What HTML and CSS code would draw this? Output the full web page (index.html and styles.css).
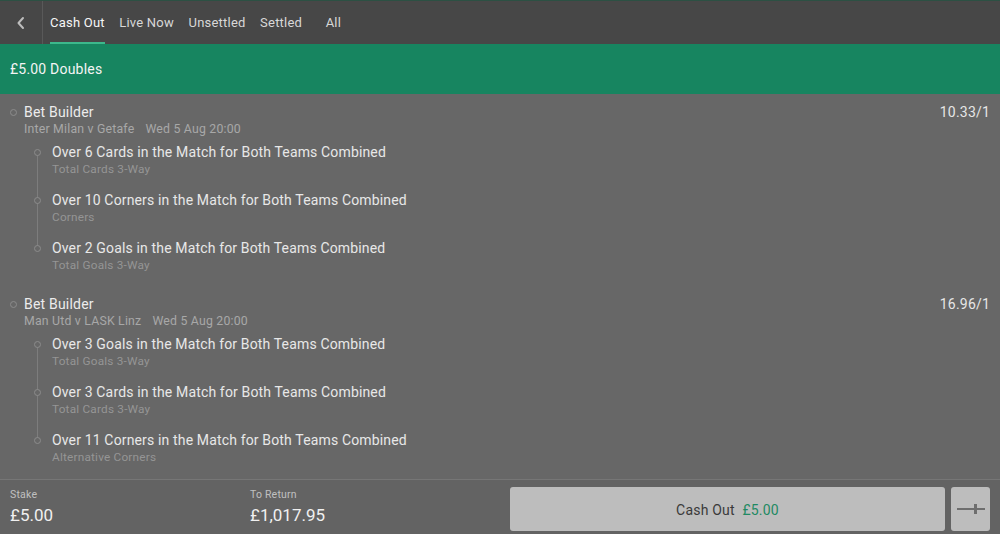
FILE: index.html
```html
<!DOCTYPE html>
<html lang="en">
<head>
    <meta charset="UTF-8">
    <meta name="viewport" content="width=device-width, initial-scale=1.0">
    <title>My Bets</title>
    <link rel="stylesheet" href="styles.css">
</head>
<body>

    <div class="app">
        <!-- Barra superior con pestañas -->
        <header class="topbar">
            <div class="back">
                <svg width="10" height="14" viewBox="0 0 10 14"><path d="M7 2 L2.5 7 L7 12" fill="none" stroke="#bdbdbd" stroke-width="2" stroke-linecap="round" stroke-linejoin="round"/></svg>
            </div>
            <nav class="tabs">
                <span class="tab active">Cash Out</span>
                <span class="tab">Live Now</span>
                <span class="tab">Unsettled</span>
                <span class="tab">Settled</span>
                <span class="tab tab-all">All</span>
            </nav>
        </header>

        <div class="banner">£5.00 Doubles</div>

        <main class="bets">
            <section class="bet">
                <div class="bet-head">
                    <div class="bet-title"><span class="dot"></span>Bet Builder</div>
                    <div class="odds">10.33/1</div>
                </div>
                <div class="bet-sub">Inter Milan v Getafe<span class="when">Wed 5 Aug 20:00</span></div>
                <div class="legs">
                    <div class="leg">
                        <div class="leg-title"><span class="dot"></span>Over 6 Cards in the Match for Both Teams Combined</div>
                        <div class="leg-market">Total Cards 3-Way</div>
                    </div>
                    <div class="leg">
                        <div class="leg-title"><span class="dot"></span>Over 10 Corners in the Match for Both Teams Combined</div>
                        <div class="leg-market">Corners</div>
                    </div>
                    <div class="leg">
                        <div class="leg-title"><span class="dot"></span>Over 2 Goals in the Match for Both Teams Combined</div>
                        <div class="leg-market">Total Goals 3-Way</div>
                    </div>
                </div>
            </section>

            <section class="bet">
                <div class="bet-head">
                    <div class="bet-title"><span class="dot"></span>Bet Builder</div>
                    <div class="odds">16.96/1</div>
                </div>
                <div class="bet-sub">Man Utd v LASK Linz<span class="when">Wed 5 Aug 20:00</span></div>
                <div class="legs">
                    <div class="leg">
                        <div class="leg-title"><span class="dot"></span>Over 3 Goals in the Match for Both Teams Combined</div>
                        <div class="leg-market">Total Goals 3-Way</div>
                    </div>
                    <div class="leg">
                        <div class="leg-title"><span class="dot"></span>Over 3 Cards in the Match for Both Teams Combined</div>
                        <div class="leg-market">Total Cards 3-Way</div>
                    </div>
                    <div class="leg">
                        <div class="leg-title"><span class="dot"></span>Over 11 Corners in the Match for Both Teams Combined</div>
                        <div class="leg-market">Alternative Corners</div>
                    </div>
                </div>
            </section>
        </main>

        <footer class="summary">
            <div class="figure stake">
                <span class="label">Stake</span>
                <span class="amount">£5.00</span>
            </div>
            <div class="figure return">
                <span class="label">To Return</span>
                <span class="amount">£1,017.95</span>
            </div>
            <button class="cashout">Cash Out <span class="cash-value">£5.00</span></button>
            <button class="partial">
                <svg width="28" height="12" viewBox="0 0 28 12"><rect x="0" y="5" width="28" height="2" fill="#6e6e6e"/><rect x="17" y="1" width="3" height="10" fill="#6e6e6e"/></svg>
            </button>
        </footer>
    </div>

</body>
</html>
```

FILE: styles.css
```css
/* Estilos generales */
body {
    margin: 0;
    padding: 0;
    font-family: Roboto, "Liberation Sans", Arial, sans-serif;
    background-color: #676767;
    color: #ebebeb;
}

.app {
    display: flex;
    flex-direction: column;
    height: 534px;
    overflow: hidden;
}

/* Barra superior */
.topbar {
    display: flex;
    height: 43px;
    background-color: #474747;
    border-top: 1px solid #2c5043;
}

.back {
    width: 42px;
    display: flex;
    align-items: center;
    justify-content: center;
    border-right: 1px solid #595959;
}

.tabs {
    display: flex;
    gap: 14.5px;
    padding-left: 7px;
}

.tab {
    display: flex;
    align-items: center;
    padding-top: 2px;
    font-size: 13px;
    letter-spacing: 0.22px;
    color: #d8d8d8;
    border-bottom: 2px solid transparent;
}

.tab.active {
    color: #f6f6f6;
    border-bottom-color: #3cb88c;
}

.tab-all {
    margin-left: 9px;
}

/* Franja verde */
.banner {
    height: 50px;
    display: flex;
    align-items: center;
    padding-left: 10px;
    background-color: #178560;
    color: #f4f4f4;
    font-size: 14px;
    letter-spacing: 0.2px;
}

/* Apuestas */
.bets {
    flex: 1;
}

.bet {
    height: 192px;
    padding: 9px 10px 0 10px;
    box-sizing: border-box;
}

.bet-head {
    display: flex;
    justify-content: space-between;
    line-height: 18px;
    font-size: 14px;
    letter-spacing: 0.2px;
}

.bet-title {
    display: flex;
    align-items: center;
    color: #ececec;
}

.dot {
    width: 5px;
    height: 5px;
    border: 1px solid #8c8c8c;
    border-radius: 50%;
    margin-right: 7px;
    background-color: #676767;
    position: relative;
    z-index: 1;
}

.odds {
    color: #e6e6e6;
}

.bet-sub {
    padding-left: 14px;
    font-size: 12.3px;
    line-height: 16px;
    letter-spacing: 0.2px;
    color: #a8a8a8;
}

.when {
    margin-left: 11px;
}

.legs {
    position: relative;
    margin-top: 6px;
    padding-left: 24px;
}

/* Línea que une los círculos */
.legs::before {
    content: "";
    position: absolute;
    left: 27px;
    top: 9px;
    bottom: 39px;
    width: 1px;
    background-color: #7d7d7d;
}

.leg {
    height: 48px;
}

.leg-title {
    display: flex;
    align-items: center;
    font-size: 14px;
    line-height: 18px;
    letter-spacing: 0.15px;
    color: #e8e8e8;
}

.leg-title .dot {
    margin-right: 11px;
}

.leg-market {
    padding-left: 18px;
    font-size: 11.8px;
    line-height: 17px;
    letter-spacing: 0.2px;
    color: #959595;
}

/* Pie con importes */
.summary {
    height: 55px;
    display: flex;
    align-items: flex-start;
    padding: 7px 10px 0 10px;
    border-top: 1px solid #767676;
    background-color: #636363;
    box-sizing: border-box;
}

.figure {
    display: flex;
    flex-direction: column;
}

.stake {
    width: 240px;
}

.return {
    width: 260px;
}

.label {
    font-size: 10.5px;
    line-height: 16px;
    letter-spacing: 0.2px;
    color: #c0c0c0;
}

.amount {
    font-size: 17px;
    line-height: 24px;
    color: #f0f0f0;
}

.cashout {
    flex: 1;
    height: 44px;
    border: none;
    border-radius: 3px;
    background-color: #bdbdbd;
    color: #3a3a3a;
    font-family: inherit;
    font-size: 14px;
    letter-spacing: 0.2px;
    padding-top: 2px;
}

.cash-value {
    color: #1f8a63;
    margin-left: 4px;
}

.partial {
    width: 39px;
    height: 44px;
    margin-left: 6px;
    border: none;
    border-radius: 3px;
    background-color: #bdbdbd;
    display: flex;
    align-items: center;
    justify-content: center;
    padding: 0;
}
```
